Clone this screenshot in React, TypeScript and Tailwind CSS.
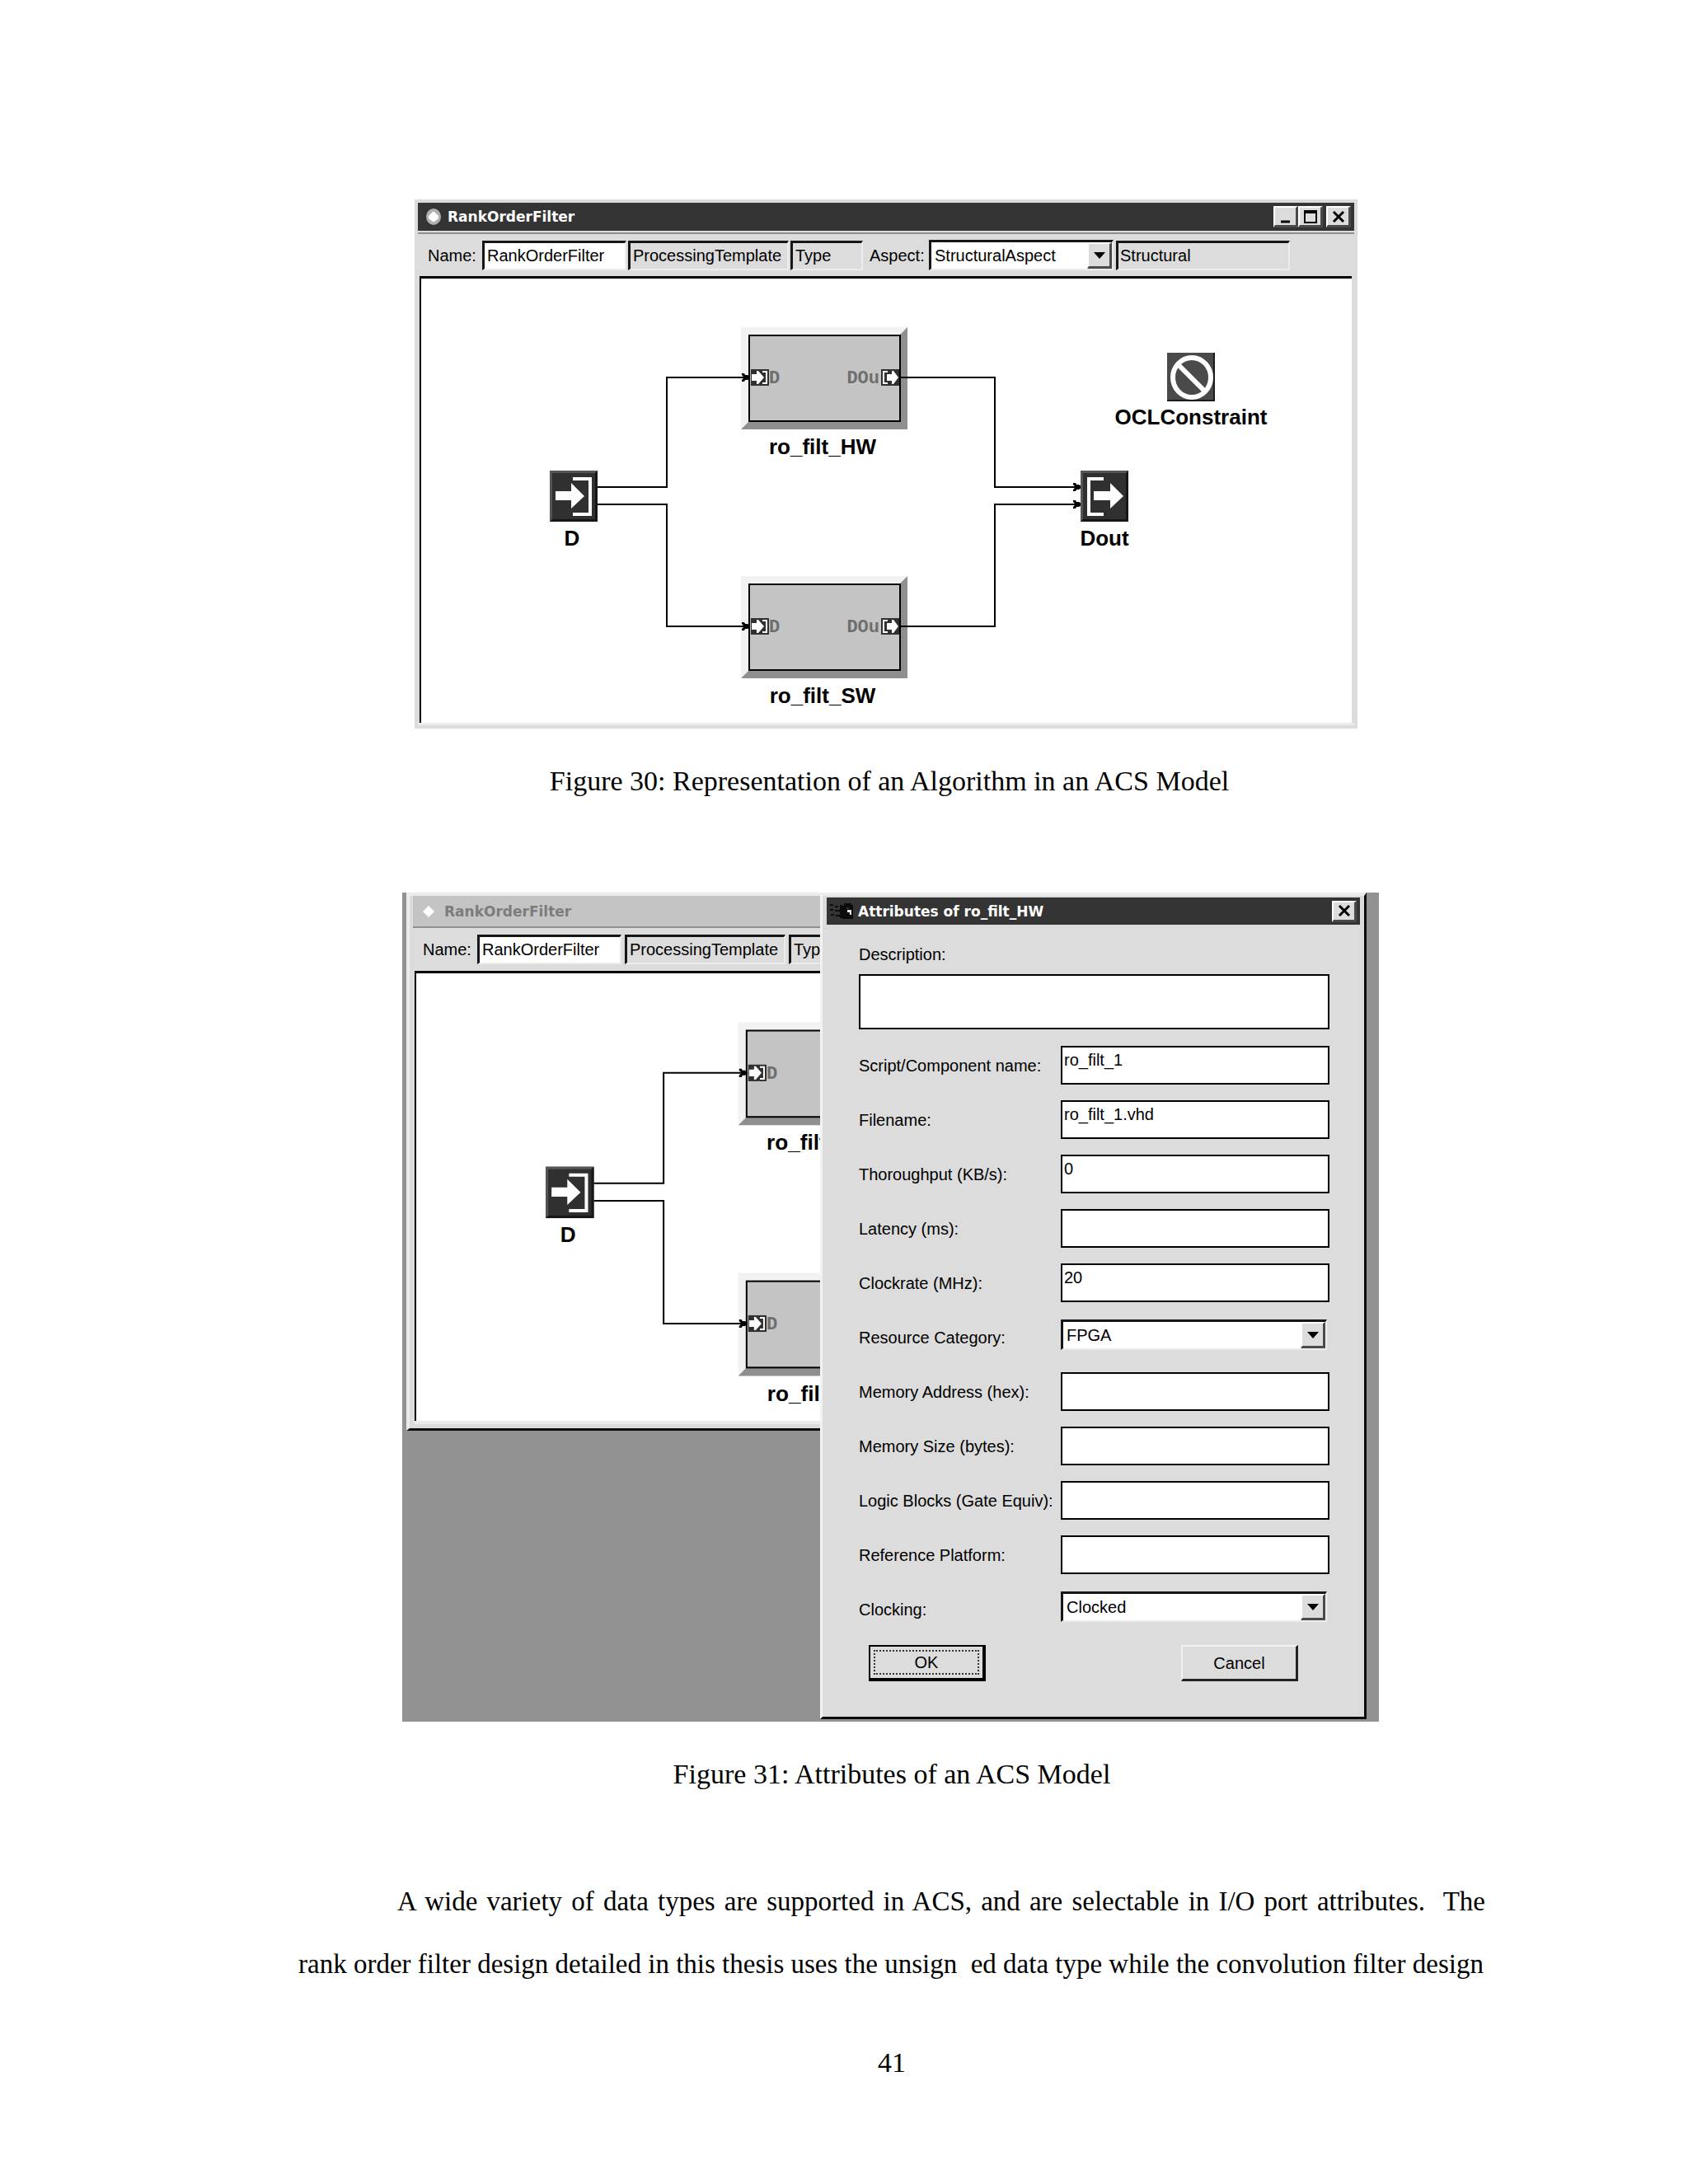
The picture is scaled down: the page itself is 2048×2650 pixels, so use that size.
import type { ReactNode } from 'react'

const UI_FONT = "font-['Liberation_Sans',Arial,sans-serif] text-[20px] leading-[24px] text-black"
const SERIF = "font-['Liberation_Serif','Times_New_Roman',serif] text-[34px] text-black"
const TITLE_FONT = "font-['DejaVu_Sans',Verdana,sans-serif] text-[17px] leading-[24px] font-bold"
const PORT_FONT = "font-['Liberation_Mono','Courier_New',monospace] text-[22px] font-bold"

// Sunken edge shared by the toolbar fields
const SUNKEN =
  'border-t-[3px] border-l-[3px] border-r-2 border-b-2 border-t-[#161616] border-l-[#161616] border-r-[#ececec] border-b-[#ececec]'

// Raised edge shared by the small buttons
const RAISED =
  'border-t-2 border-l-2 border-r-[3px] border-b-[3px] border-t-white border-l-white border-r-[#4a4a4a] border-b-[#4a4a4a] bg-[#dcdcdc]'

interface FieldDef {
  id: string
  label: string
  value: string
  options?: string[]
}

const FIELDS: FieldDef[] = [
  { id: 'script', label: 'Script/Component name:', value: 'ro_filt_1' },
  { id: 'filename', label: 'Filename:', value: 'ro_filt_1.vhd' },
  { id: 'throughput', label: 'Thoroughput (KB/s):', value: '0' },
  { id: 'latency', label: 'Latency (ms):', value: '' },
  { id: 'clockrate', label: 'Clockrate (MHz):', value: '20' },
  { id: 'category', label: 'Resource Category:', value: 'FPGA', options: ['FPGA'] },
  { id: 'address', label: 'Memory Address (hex):', value: '' },
  { id: 'size', label: 'Memory Size (bytes):', value: '' },
  { id: 'blocks', label: 'Logic Blocks (Gate Equiv):', value: '' },
  { id: 'platform', label: 'Reference Platform:', value: '' },
  { id: 'clocking', label: 'Clocking:', value: 'Clocked', options: ['Clocked'] },
]

function DropDown({ id, value, options }: { id: string; value: string; options: string[] }) {
  return (
    <div className={`relative flex h-[37px] w-full bg-white ${SUNKEN}`}>
      <select
        id={id}
        defaultValue={value}
        className={`w-full appearance-none bg-transparent pr-8 pl-1 outline-none ${UI_FONT}`}
      >
        {options.map((option) => (
          <option key={option}>{option}</option>
        ))}
      </select>
      <span
        className={`pointer-events-none absolute top-0 right-0 flex h-full w-[30px] items-center justify-center ${RAISED}`}
      >
        <svg width="14" height="8" viewBox="0 0 14 8">
          <path d="M0 0H14L7 8Z" fill="#000" />
        </svg>
      </span>
    </div>
  )
}

function PortFrame() {
  return (
    <>
      <rect width="58" height="62" fill="#303030" />
      <path d="M0 62V0H58L55 3H3V59Z" fill="#555" />
      <path d="M58 0V62H0L3 59H55V3Z" fill="#161616" />
    </>
  )
}

function PortIn({ x, y }: { x: number; y: number }) {
  return (
    <g transform={`translate(${x} ${y})`}>
      <PortFrame />
      <path d="M7 25H26V15L42 31L26 46V36H7Z" fill="#fff" />
      <path d="M28 8H51V55H28V51H47V12H28Z" fill="#fff" />
    </g>
  )
}

function PortOut({ x, y }: { x: number; y: number }) {
  return (
    <g transform={`translate(${x} ${y})`}>
      <PortFrame />
      <path d="M16 25H36V15L52 31L36 46V36H16Z" fill="#fff" />
      <path d="M28 8H8V55H28V51H12V12H28Z" fill="#fff" />
    </g>
  )
}

function Block({ y, name, covered }: { y: number; name: string; covered: boolean }) {
  return (
    <g transform={`translate(388 ${y})`}>
      <rect width="202" height="124" fill="#f2f2f2" />
      <path d="M202 0V124H0L10 114H192V10Z" fill="#8f8f8f" />
      <rect x="10" y="10" width="183" height="104" fill="#c4c4c4" stroke="#000" strokeWidth="2" />
      {/* input port */}
      <rect x="12" y="51" width="22" height="20" fill="#303030" />
      <path d="M13 57H19V53H21L28 61L21 69H19V65H13Z" fill="#fff" />
      <path d="M26 53H32V69H26V67H30V55H26Z" fill="#fff" />
      <text x="34" y="68" className={PORT_FONT} fill="#6e6e6e">
        D
      </text>
      {!covered && (
        <>
          {/* output port */}
          <rect x="170" y="51" width="22" height="20" fill="#303030" />
          <path d="M177 57H183V53H185L191 61L185 69H183V65H177Z" fill="#fff" />
          <path d="M178 53H172V69H178V67H174V55H178Z" fill="#fff" />
          <text x="168" y="68" textAnchor="end" className={PORT_FONT} fill="#6e6e6e">
            DOu
          </text>
        </>
      )}
      <text x="99" y="154" textAnchor="middle" className="text-[26px] font-bold" fill="#000">
        {name}
      </text>
    </g>
  )
}

function ArrowHead({ x, y }: { x: number; y: number }) {
  return (
    <path
      transform={`translate(${x} ${y})`}
      d="M0 -1L-3 -3H-6L-7 -5H-10V-3L-7 0L-10 3V5H-7L-6 3H-3L0 1Z"
      fill="#000"
    />
  )
}

// `covered` leaves out the right-hand side, which lies behind another window
function Diagram({ className, covered = false }: { className: string; covered?: boolean }) {
  return (
    <svg
      viewBox="0 0 1129 539"
      className={`block shrink-0 font-['Liberation_Sans',Arial,sans-serif] ${className}`}
      role="img"
      aria-label="RankOrderFilter model"
    >
      <Block y={59} name="ro_filt_HW" covered={covered} />
      <Block y={361} name="ro_filt_SW" covered={covered} />
      <g fill="none" stroke="#000" strokeWidth="2">
        <path d="M214 253H298V120H398" />
        <path d="M214 274H298V422H398" />
      </g>
      <ArrowHead x={399} y={120} />
      <ArrowHead x={399} y={422} />
      <PortIn x={156} y={233} />
      <text x="183" y="324" textAnchor="middle" className="text-[26px] font-bold">
        D
      </text>
      {!covered && (
        <>
          <g fill="none" stroke="#000" strokeWidth="2">
            <path d="M580 120H696V253H800" />
            <path d="M580 422H696V274H800" />
          </g>
          <ArrowHead x={801} y={253} />
          <ArrowHead x={801} y={274} />
          <PortOut x={800} y={233} />
          <g transform="translate(905 90)">
            <rect width="58" height="59" fill="#4a4a4a" />
            <path d="M58 0V59H0V57H56V0Z" fill="#1c1c1c" />
            <ellipse cx="30" cy="30" rx="23" ry="24" fill="none" stroke="#fff" strokeWidth="6" />
            <path d="M14 15L46 47" stroke="#fff" strokeWidth="6" />
          </g>
          <g className="text-[26px] font-bold" fill="#000" textAnchor="middle">
            <text x="829" y="324">Dout</text>
            <text x="934" y="177">OCLConstraint</text>
          </g>
        </>
      )}
    </svg>
  )
}

function TitleButton({ label, children }: { label: string; children: ReactNode }) {
  return (
    <button type="button" aria-label={label} className={`flex h-[26px] w-[30px] items-center justify-center ${RAISED}`}>
      <svg width="20" height="18" viewBox="0 0 20 18" fill="none" stroke="#000">
        {children}
      </svg>
    </button>
  )
}

function CloseGlyph() {
  return <path d="M4 3L16 15M16 3L4 15" strokeWidth="3" />
}

function ToolbarFields({ prefix, gap }: { prefix: string; gap: string }) {
  return (
    <div className={`flex shrink-0 items-center ${gap}`}>
      <div className="flex items-center">
        <label htmlFor={`${prefix}-name`} className="w-[66px] shrink-0">
          Name:
        </label>
        <input
          id={`${prefix}-name`}
          defaultValue="RankOrderFilter"
          className={`h-[36px] w-[175px] shrink-0 bg-white pl-[3px] outline-none ${SUNKEN}`}
        />
      </div>
      <input
        aria-label="Kind"
        readOnly
        defaultValue="ProcessingTemplate"
        className={`h-[36px] w-[195px] shrink-0 bg-transparent pl-[3px] outline-none ${SUNKEN}`}
      />
      <input
        aria-label="Type"
        readOnly
        defaultValue="Type"
        className={`h-[36px] w-[88px] shrink-0 bg-transparent pl-[3px] outline-none ${SUNKEN}`}
      />
    </div>
  )
}

function ModelWindow() {
  return (
    <div className={`flex w-full max-w-[1144px] flex-col border-4 border-[#dcdcdc] bg-[#dcdcdc] ${UI_FONT}`}>
      <div className="flex h-[34px] items-center bg-[#343434] pr-1 pl-2.5">
        <svg width="18" height="20" viewBox="0 0 18 20">
          <ellipse cx="9" cy="10" rx="9" ry="10" fill="#b0b0b0" />
          <path d="M8 4H10L15 9V12L10 16H8L3 12V9Z" fill="#fff" />
        </svg>
        <h2 className={`ml-2 flex-1 text-white ${TITLE_FONT}`}>RankOrderFilter</h2>
        <div className="flex">
          <TitleButton label="Minimize">
            <path d="M4 15H15" strokeWidth="3" />
          </TitleButton>
          <TitleButton label="Maximize">
            <path d="M2 3H18" strokeWidth="4" />
            <path d="M3 3V16H17V3" strokeWidth="2" />
          </TitleButton>
          <div className="ml-1 flex">
            <TitleButton label="Close">
              <CloseGlyph />
            </TitleButton>
          </div>
        </div>
      </div>
      <div className="mt-0.5 h-[2px] bg-[#8f8f8f]" />
      <div className="flex h-[51px] items-center pl-3">
        <ToolbarFields prefix="model" gap="gap-0.5" />
        <label htmlFor="aspect" className="ml-2 w-[72px] shrink-0">
          Aspect:
        </label>
        <div className="w-[224px] shrink-0">
          <DropDown id="aspect" value="StructuralAspect" options={['StructuralAspect']} />
        </div>
        <input
          aria-label="Aspect kind"
          readOnly
          defaultValue="Structural"
          className={`ml-[3px] h-[36px] w-[211px] bg-transparent pl-0.5 outline-none ${SUNKEN}`}
        />
      </div>
      <div className="mr-[3px] ml-0.5 overflow-hidden border-t-[3px] border-l-2 border-black bg-white">
        <Diagram className="w-full" />
      </div>
      <div className="h-[3px] bg-[#ececec]" />
    </div>
  )
}

function BackgroundWindow() {
  return (
    <div
      className={`min-w-0 flex-1 overflow-hidden border-t-4 border-b-[3px] border-l-4 border-t-[#ececec] border-b-[#0c0c0c] border-l-[#ececec] bg-[#dcdcdc] ${UI_FONT}`}
    >
      <div className="ml-1 flex h-[37px] items-center bg-[#c4c4c4] pl-3">
        <svg width="14" height="14" viewBox="0 0 14 14">
          <path d="M7 0L14 7L7 14L0 7Z" fill="#fff" />
        </svg>
        <h2 className={`ml-3 text-[#7c7c7c] ${TITLE_FONT}`}>RankOrderFilter</h2>
      </div>
      <div className="ml-1 h-[2px] bg-[#8f8f8f]" />
      <div className="flex h-[52px] items-center pl-4">
        <ToolbarFields prefix="background" gap="gap-1" />
      </div>
      <div className="ml-1.5 flex overflow-hidden border-t-[3px] border-l-2 border-black bg-white">
        <Diagram className="w-[1137px]" covered />
      </div>
      <div className="ml-1.5 h-[9px] border-t-4 border-[#ececec]" />
    </div>
  )
}

function AttributesDialog() {
  return (
    <form
      className={`flex w-[663px] shrink-0 flex-col border-t-4 border-r-[3px] border-b-[3px] border-l-[3px] border-t-[#ececec] border-r-[#0c0c0c] border-b-[#0c0c0c] border-l-[#f2f2f2] bg-[#dcdcdc] ${UI_FONT}`}
    >
      <div className="mx-[5px] mt-0.5 flex h-[33px] items-center bg-[#343434] pr-1 pl-1">
        <svg width="28" height="22" viewBox="0 0 28 22">
          <g fill="#0c0c0c">
            <path d="M0 2H4V4H0ZM6 4H10V6H6ZM0 8H4V10H0ZM6 9H12V11H6ZM1 14H5V16H1ZM7 15H12V17H7ZM12 3H15V19H12Z" />
            <path d="M17 1H26V3H28V20H15V4H17Z" />
          </g>
          <path d="M20 6H23V8H20Z" fill="#343434" />
          <path d="M21 9H26V15H24V12H21Z" fill="#e4e4e4" />
        </svg>
        <h2 className={`ml-1.5 flex-1 text-white ${TITLE_FONT}`}>Attributes of ro_filt_HW</h2>
        <TitleButton label="Close">
          <CloseGlyph />
        </TitleButton>
      </div>
      <div className="flex flex-col pt-6 pr-[42px] pb-[43px] pl-[44px]">
        <label htmlFor="description">Description:</label>
        <textarea id="description" className="mt-3 h-[67px] resize-none border-2 border-black bg-white outline-none" />
        <div className="mt-5 flex flex-col gap-[19px]">
          {FIELDS.map((field) => (
            <div key={field.id} className="flex h-[47px] items-start">
              <label htmlFor={field.id} className="w-[245px] shrink-0 self-center whitespace-nowrap">
                {field.label}
              </label>
              {field.options ? (
                <div className="flex-1 pt-0.5 pr-[3px]">
                  <DropDown id={field.id} value={field.value} options={field.options} />
                </div>
              ) : (
                <input
                  id={field.id}
                  defaultValue={field.value}
                  className="h-full min-w-0 flex-1 border-2 border-black bg-white pb-3 pl-0.5 outline-none"
                />
              )}
            </div>
          ))}
        </div>
        <div className="mt-5 flex justify-between pr-[38px] pl-3">
          <button
            type="submit"
            className="h-[44px] w-[142px] border-t-2 border-r-4 border-b-4 border-l-2 border-black bg-[#dcdcdc] p-1"
          >
            <span className="flex h-full items-center justify-center border-2 border-dotted border-[#333]">OK</span>
          </button>
          <button
            type="button"
            className="h-[44px] w-[142px] border-t-2 border-r-[3px] border-b-[3px] border-l-2 border-t-[#f2f2f2] border-r-[#222] border-b-[#222] border-l-[#f2f2f2] bg-[#dcdcdc]"
          >
            Cancel
          </button>
        </div>
      </div>
    </form>
  )
}

export default function App() {
  return (
    <main className={`flex min-h-screen w-full flex-col bg-white pt-[242px] pr-[246px] pb-[120px] pl-[362px] ${SERIF}`}>
      <figure className="flex flex-col items-center">
        <div className="flex w-full justify-center pr-3.5">
          <ModelWindow />
        </div>
        <figcaption className="mt-11 pr-1.5 leading-[40px]">
          Figure 30: Representation of an Algorithm in an ACS Model
        </figcaption>
      </figure>

      <figure className="mt-[115px] flex flex-col items-center pr-[3px]">
        <div className="flex w-full max-w-[1185px] items-start bg-[#929292] pr-[15px] pb-[3px] pl-[5px]">
          <BackgroundWindow />
          <AttributesDialog />
        </div>
        <figcaption className="mt-11 pl-[3px] leading-[40px]">Figure 31: Attributes of an ACS Model</figcaption>
      </figure>

      <p className="mt-24 text-justify indent-[120px] text-[33px] leading-[76px] whitespace-pre-wrap">
        {
          'A wide variety of data types are supported in ACS, and are selectable in I/O port attributes.  The rank order filter design detailed in this thesis uses the unsign  ed data type while the convolution filter design'
        }
      </p>

      <footer className="mt-[62px] text-center leading-[40px]">41</footer>
    </main>
  )
}
